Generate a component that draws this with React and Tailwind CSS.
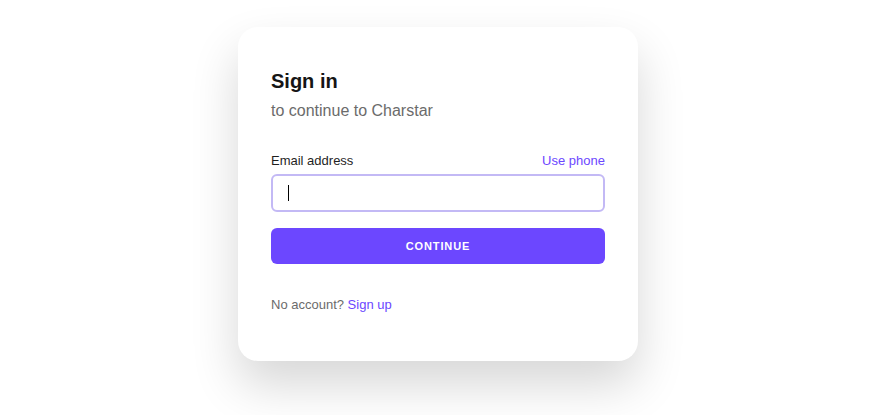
import { useState } from 'react';

export default function App() {
  const [email, setEmail] = useState('');

  return (
    <div className="min-h-[415px] bg-white flex justify-center pt-[27px] font-['Liberation_Sans',Arial,sans-serif]">
      <div className="w-[400px] h-[334px] bg-white rounded-[20px] shadow-[0_24px_48px_rgba(0,0,0,0.16)] px-[33px] pt-[40px]">
        <h1 className="text-[20px] leading-[28px] font-bold text-[#151515]">Sign in</h1>
        <p className="text-[16px] leading-[24px] text-[#6b6b6b] mt-[4px]">to continue to Charstar</p>

        <div className="mt-[28px] flex items-end justify-between">
          <label className="text-[13px] leading-[20px] text-[#1f1f1f]">Email address</label>
          <a href="#" className="text-[13px] leading-[20px] text-[#6c47ff]">Use phone</a>
        </div>
        <div className="relative mt-[3px]">
          <input
            value={email}
            onChange={(e) => setEmail(e.target.value)}
            className="w-full h-[38px] rounded-[6px] border-2 border-[#c3b9f5] px-[15px] text-[15px] text-black outline-none"
          />
          {email === '' && (
            <span className="absolute left-[17px] top-[11px] w-px h-[16px] bg-black" />
          )}
        </div>

        <button className="mt-[16px] w-full h-[36px] rounded-[6px] bg-[#6c47ff] text-white text-[11px] font-bold tracking-[0.08em]">
          CONTINUE
        </button>

        <p className="mt-[31px] text-[13px] leading-[20px] text-[#6b6b6b]">
          No account? <a href="#" className="text-[#6c47ff]">Sign up</a>
        </p>
      </div>
    </div>
  );
}
